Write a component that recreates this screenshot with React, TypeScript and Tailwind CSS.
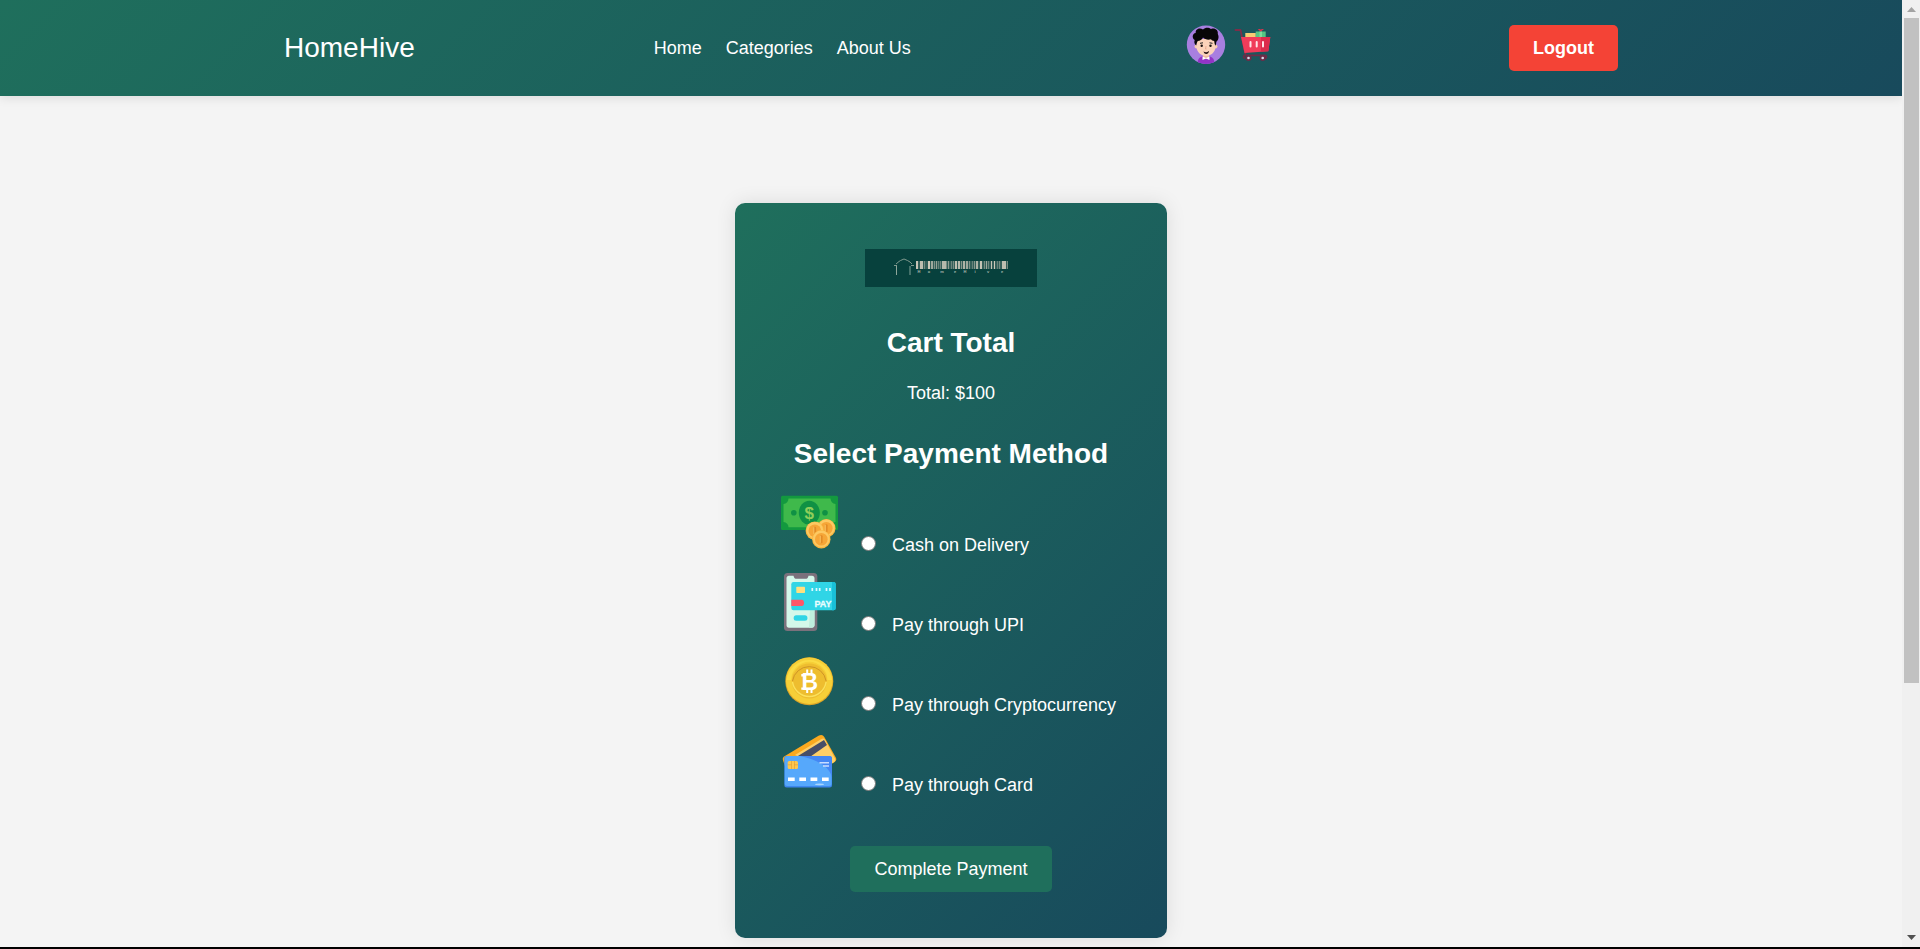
import React from "react";

const bars: [number, number, number][] = [
  [51, 2, 0.9], [55, 3, 0.85], [59, 1, 0.4], [63, 2, 0.95], [66, 2, 0.65], [69, 1, 0.45], [71, 1, 0.6],
  [73, 1, 0.3], [75, 1, 0.35], [77, 4, 0.8], [81, 1, 0.4], [83, 1, 0.55], [86, 1, 0.35], [88, 1, 0.4],
  [90, 2, 0.85], [93, 2, 0.8], [96, 1, 0.5], [98, 2, 0.75], [101, 2, 0.65], [104, 1, 0.45], [107, 1, 0.3],
  [109, 1, 0.5], [111, 2, 0.75], [115, 2, 0.9], [119, 1, 0.4], [121, 1, 0.65], [123, 1, 0.35],
  [126, 1, 0.9], [129, 1, 0.95], [132, 1, 0.3], [134, 1, 0.4], [137, 4, 0.85], [142, 1, 0.4],
];

const letters: [number, string][] = [
  [54, "H"], [64, "o"], [77, "m"], [90, "e"], [100, "H"], [110, "i"], [123, "v"], [137, "e"],
];

function BrandMark() {
  return (
    <svg viewBox="0 0 172 38" className="h-[38px] w-[172px]" role="img" aria-label="HomeHive">
      <rect width="172" height="38" fill="#07413d" />
      <path d="M29 16.500h3M46 16.500h3M31 15l3-2.500 1.500-1 3.500-1.500 3.500 1.500 2.500 1.500 2 2" fill="none" stroke="#7f998e" strokeWidth="1" />
      <path d="M31.500 17v9" stroke="#8fa79b" strokeWidth="1" />
      <path d="M45 17v9" stroke="#44716a" strokeWidth="2" />
      <rect x="51" y="12" width="92" height="8" fill="#d6cfc0" opacity=".22" />
      {bars.map(([x, w, o]) => (
        <rect key={x} x={x} y="12" width={w} height="8" fill="#d6cfc0" opacity={o} />
      ))}
      {letters.map(([x, c]) => (
        <text key={x} x={x} y="24" textAnchor="middle" fontSize="4" fontWeight="bold" fill="#a9b8ac" fontFamily="Liberation Sans, sans-serif">
          {c}
        </text>
      ))}
    </svg>
  );
}

function Avatar() {
  return (
    <svg viewBox="0 0 40 40" className="size-10" aria-hidden="true">
      <defs>
        <clipPath id="avatar-clip"><circle cx="20" cy="19.700" r="19.200" /></clipPath>
      </defs>
      <circle cx="20" cy="19.700" r="19.200" fill="#a87fe0" />
      <g clipPath="url(#avatar-clip)">
        <path d="M11.500 40c0-5 1-7.500 4.500-8.500h8c3.500 1 4.500 3.500 4.500 8.500z" fill="#9334c6" />
        <path d="M17 28h6v4l-3 2-3-2z" fill="#efb99b" />
        <path d="M16.500 31.500l3.500 1.500 3.500-1.500v3.500l-3.500-1.500-3.500 1.500z" fill="#fff" />
        <circle cx="10.500" cy="21.500" r="2" fill="#f6cbb0" />
        <circle cx="29.500" cy="21.500" r="2" fill="#f6cbb0" />
        <path d="M10.500 14h19v8c0 5-5 9-9.500 9s-9.500-4-9.500-9z" fill="#fbd3ba" />
        <path d="M10.200 20.500c-2-1.500-2.200-3.500-1.500-5.500-3-2-2.500-6.500 1-7-.5-4 4-5.500 7.300-3.500 2.500-2.500 6-2 8-.5 4-1.500 7.500 1.500 6.800 5 1.700 3.500.2 6.500-1.500 7.800 0 1.500-.3 2.800-.8 4-.8-1.300-1-2.800-1.300-4.800-1.500 0-2.500-.7-3.200-1.700-3 .8-6 .2-8-1.800-1 2.300-3 3.500-5.200 3.500-.9 1.200-1.200 2.700-1.600 4.500z" fill="#080708" />
        <path d="M14 18.300l3-.5M23.500 17.800l3 .5" stroke="#222" strokeWidth="1" />
        <circle cx="15.700" cy="20.800" r="1.200" fill="#17100f" />
        <circle cx="24.500" cy="20.800" r="1.200" fill="#17100f" />
        <path d="M20 21l-.5 3h1" fill="none" stroke="#e6a58a" strokeWidth=".8" />
        <path d="M17.500 26.500c2 1.300 3.500 1 5.500-.8-.2 4-4.500 4.500-5.500.8z" fill="#241010" />
      </g>
    </svg>
  );
}

function CartIcon() {
  return (
    <svg viewBox="0 0 40 40" className="size-10" aria-hidden="true">
      <path d="M1.500 5h5l5 24.500" fill="none" stroke="#7d2e49" strokeWidth="1.800" strokeLinecap="round" strokeLinejoin="round" />
      <path d="M10.500 30.300h20.500c2 0 2 3 0 3M10.500 30.300c-1.500 1-1 2.500.5 3" fill="none" stroke="#6d2c48" strokeWidth="1.800" />
      <rect x="11.300" y="8" width="10.500" height="5" fill="#f6cb74" />
      <rect x="21.700" y="6.500" width="10" height="6.500" fill="#55c583" />
      <path d="M25.500 6.500h2.500V13h-2.500z" fill="#7fdb9c" />
      <path d="M26.700 6.500l-3-2.200 2.500-.3.700 1 .8-1 2.300.3z" fill="#e8324d" />
      <path d="M7 12h29.300l-2 14.200-23.800 1.900z" fill="#f03c5a" />
      <path d="M27 12h9.300l-2 14.200-7.300.6z" fill="#dc2b4c" />
      <path d="M16.500 17v4.500M22.700 17v4.500M29 17v4.500" stroke="#ffe4e8" strokeWidth="2" strokeLinecap="round" />
      <circle cx="14.500" cy="33" r="3" fill="#6d2c48" />
      <circle cx="28.700" cy="33" r="3" fill="#6d2c48" />
      <circle cx="14.500" cy="33" r="1.300" fill="#d8dbe8" />
      <circle cx="28.700" cy="33" r="1.300" fill="#d8dbe8" />
    </svg>
  );
}

function Coin({ x, y }: { x: number; y: number }) {
  return (
    <g>
      <circle cx={x} cy={y} r="9.200" fill="#f9b741" />
      <circle cx={x} cy={y - 0.5} r="8.300" fill="#fdc963" />
      <circle cx={x} cy={y} r="6.300" fill="#f6a637" />
      <rect x={x - 1.3} y={y - 4} width="2.600" height="8" rx="1" fill="#e28b26" />
      <path d={`M${x - 1} ${y - 3.5}v7`} stroke="#ffce70" strokeWidth=".8" />
    </g>
  );
}

function CashIcon() {
  return (
    <svg viewBox="0 0 58 58" className="size-[58px]" aria-hidden="true">
      <rect x="0" y="2.700" width="57" height="34.300" rx="1.500" fill="#13993f" />
      <path d="M7.500 5.500h42c0 3 2 5.200 5 5.500v18c-3 .3-5 2.500-5 5.300h-42c0-3-2-5-5-5.300V11c3-.3 5-2.500 5-5.500z" fill="#3fb94b" />
      <ellipse cx="28.300" cy="19.700" rx="10.500" ry="12" fill="#0f9144" />
      <circle cx="12.800" cy="19.700" r="2.800" fill="#0f9144" />
      <circle cx="44" cy="19.700" r="2.800" fill="#0f9144" />
      <text x="28.300" y="25.500" textAnchor="middle" fontSize="17" fontWeight="bold" fill="#8fce5a" fontFamily="Liberation Sans, sans-serif">$</text>
      <Coin x={45.3} y={35.3} />
      <Coin x={33.8} y={37.7} />
      <Coin x={40.3} y={46.3} />
    </svg>
  );
}

function UpiIcon() {
  return (
    <svg viewBox="0 0 58 58" className="size-[58px]" aria-hidden="true">
      <rect x="3" y="0" width="33.300" height="58" rx="3.500" fill="#7b717c" />
      <path d="M8 2.800h4.500c.5 2.500 1.500 3 3 3h9c1.500 0 2.500-.5 3-3H31c1.500 0 2.500 1 2.500 2.500v47c0 1.500-1 2.500-2.500 2.500H8c-1.500 0-2.500-1-2.500-2.500v-47C5.500 3.800 6.500 2.800 8 2.800z" fill="#d4f8ea" />
      <path d="M29 37h4.500v15c0 1.500-1 2.500-2.500 2.500h-3z" fill="#bfeedd" />
      <rect x="10.300" y="9" width="44.400" height="28.300" rx="2.200" fill="#30d5e6" />
      <path d="M51 9h1.700c1.200 0 2 1 2 2v24.300c0 1.200-.8 2-2 2H51z" fill="#18c0d8" />
      <rect x="15.300" y="13.700" width="8.700" height="6.300" rx=".8" fill="#ffe07f" />
      <path d="M31.300 15v3M35.500 15v3M38.700 15v3M45.500 15v3M49 15v3" stroke="#dcfaff" strokeWidth="1.700" />
      <path d="M10.300 26.700h10.500c3 0 3 6.300 0 6.300H10.300z" fill="#ff5768" />
      <text x="42" y="33.500" textAnchor="middle" fontSize="9" fontWeight="bold" fill="#e9fdff" stroke="#e9fdff" strokeWidth=".3" fontFamily="Liberation Sans, sans-serif">PAY</text>
      <rect x="12.700" y="42.300" width="13.700" height="5.400" rx="2.500" fill="#30d5e6" />
    </svg>
  );
}

function CryptoIcon() {
  return (
    <svg viewBox="0 0 58 58" className="size-[58px]" aria-hidden="true">
      <circle cx="28.300" cy="28.300" r="24" fill="#dda526" />
      <circle cx="28.300" cy="27.700" r="23.300" fill="#f6cf38" />
      <path d="M5.500 27a23 23 0 0 1 45.600 0h-4.600a18.200 18.200 0 0 0-36.400 0z" fill="#fbdc45" />
      <circle cx="28.300" cy="28" r="17.500" fill="#eebd2f" />
      <path d="M11.500 28a17 17 0 0 1 33.600 0" fill="none" stroke="#cf9426" strokeWidth="1" />
      <path d="M11.500 29a17 17 0 0 0 33.600 0" fill="none" stroke="#fbe15b" strokeWidth="1.500" />
      <text x="28.800" y="36.800" textAnchor="middle" fontSize="23" fontWeight="bold" fill="#fff" fontFamily="Liberation Sans, sans-serif">B</text>
      <path d="M26.200 16.500v5M30.500 16.500v5M26.200 35.500v4.500M30.500 35.500v4.500" stroke="#fff" strokeWidth="2" />
      <path d="M20.300 22.200h4M20.300 35.600h4" stroke="#fff" strokeWidth="2.400" />
    </svg>
  );
}

function CardIcon() {
  return (
    <svg viewBox="0 0 58 58" className="size-[58px]" aria-hidden="true">
      <path d="M3.500 23.200L37.500 2.700c2.500-1.400 4.500-1 5.800 1.300l11.500 20.500c1 2 .5 3.500-1.500 4.700L42 36H5L2.200 28c-.8-2-.5-3.700 1.300-4.800z" fill="#fba91f" />
      <path d="M14 22L40 6.200c2-1 3.200-.8 4.200 1L54 25.500c.7 1.700.3 2.800-1.200 3.700L44 34z" fill="#ffcf68" />
      <path d="M14.500 24.500L43 7l3 5-20 14z" fill="#474e68" />
      <rect x="3.300" y="23" width="47.700" height="31.400" rx="2.500" fill="#3d86ee" />
      <rect x="3.800" y="23" width="46.700" height="30" rx="2.500" fill="#56a8fb" />
      <path d="M19 23h29.500c1.500 0 2.500 1 2.500 2.500V44c-3-11-16-18-32-21z" fill="#4487f4" />
      <rect x="6.700" y="28" width="10.300" height="8" rx="1.500" fill="#fdc74e" />
      <path d="M6.700 31.800h4M13 31.800h4M10.500 28v8M13.500 28v8" stroke="#dd9a35" strokeWidth=".6" />
      <path d="M38.500 29.700h9.500M42 33h6" stroke="#c7ddff" strokeWidth="1.500" />
      <path d="M7 46.200h6.700M18.300 46.200H25M29.500 46.200h6.800M41 46.200h6.700" stroke="#fff" strokeWidth="3.600" />
      <ellipse cx="38.500" cy="51.300" rx="4.500" ry=".9" fill="#a9d6ff" />
    </svg>
  );
}

const methods = [
  { id: "cash", label: "Cash on Delivery", Icon: CashIcon },
  { id: "upi", label: "Pay through UPI", Icon: UpiIcon },
  { id: "crypto", label: "Pay through Cryptocurrency", Icon: CryptoIcon },
  { id: "card", label: "Pay through Card", Icon: CardIcon },
];

function Header() {
  return (
    <header className="shrink-0 bg-linear-135 from-[#1f6f5c] to-[#184a5c] py-6 shadow-[0_2px_10px_rgba(0,0,0,0.1)]">
      <div className="mx-auto flex h-12 max-w-[1334px] items-center justify-between">
        <a href="#" className="text-[28px] leading-8">HomeHive</a>
        <nav className="flex gap-6 pl-1">
          <a href="#home">Home</a>
          <a href="#categories">Categories</a>
          <a href="#about">About Us</a>
        </nav>
        <div className="flex gap-2 pb-1.5 pl-10">
          <a href="#profile" aria-label="Profile"><Avatar /></a>
          <a href="#cart" aria-label="Cart"><CartIcon /></a>
        </div>
        <button type="button" className="h-[46px] rounded-[5px] bg-[#f44336] px-6 font-bold">Logout</button>
      </div>
    </header>
  );
}

function PaymentCard() {
  return (
    <form className="flex w-full max-w-[432px] shrink-0 flex-col items-center rounded-[10px] bg-linear-135 from-[#1f6f5c] to-[#184a5c] p-[46px] shadow-[0_0_20px_rgba(0,0,0,0.1)]">
      <BrandMark />
      <h2 className="mt-10 text-[28px] leading-8 font-bold">Cart Total</h2>
      <p className="mt-6">Total: $100</p>
      <h2 className="mt-[35px] text-[28px] leading-8 font-bold">Select Payment Method</h2>
      <div className="mt-[23px] self-stretch">
        {methods.map(({ id, label, Icon }) => (
          <div key={id} className="flex h-20 items-baseline">
            <Icon />
            <input
              id={id}
              type="radio"
              name="method"
              className="mr-4 ml-[22px] size-[15px] appearance-none rounded-full border border-[#767676] bg-white checked:border-4 checked:border-[#0075ff]"
            />
            <label htmlFor={id} className="whitespace-nowrap">{label}</label>
          </div>
        ))}
      </div>
      <button type="button" className="mt-[33px] h-[46px] rounded-[5px] bg-[#1f6f5c] px-6">Complete Payment</button>
    </form>
  );
}

function ScrollBar() {
  return (
    <div className="flex w-[18px] shrink-0 flex-col items-center bg-[#f0f0f0]" aria-hidden="true">
      <svg viewBox="0 0 18 18" className="size-[18px] shrink-0"><path d="M5 12h9L9.500 7z" fill="#a3a3a3" /></svg>
      <div className="ml-px w-[15px] grow-[665] basis-0 bg-[#c1c1c1]" />
      <div className="grow-[246] basis-0" />
      <svg viewBox="0 0 18 18" className="size-[18px] shrink-0"><path d="M5 6h9l-4.500 5z" fill="#505050" /></svg>
    </div>
  );
}

export default function App() {
  return (
    <div className="flex h-screen overflow-hidden border-b-2 border-black bg-[#f4f4f4] font-['Liberation_Sans',Arial,sans-serif] text-[18px] leading-5 text-white">
      <div className="flex min-w-0 grow flex-col">
        <Header />
        <main className="flex min-h-0 grow flex-col items-center overflow-hidden pt-[107px]">
          <PaymentCard />
        </main>
      </div>
      <ScrollBar />
    </div>
  );
}
